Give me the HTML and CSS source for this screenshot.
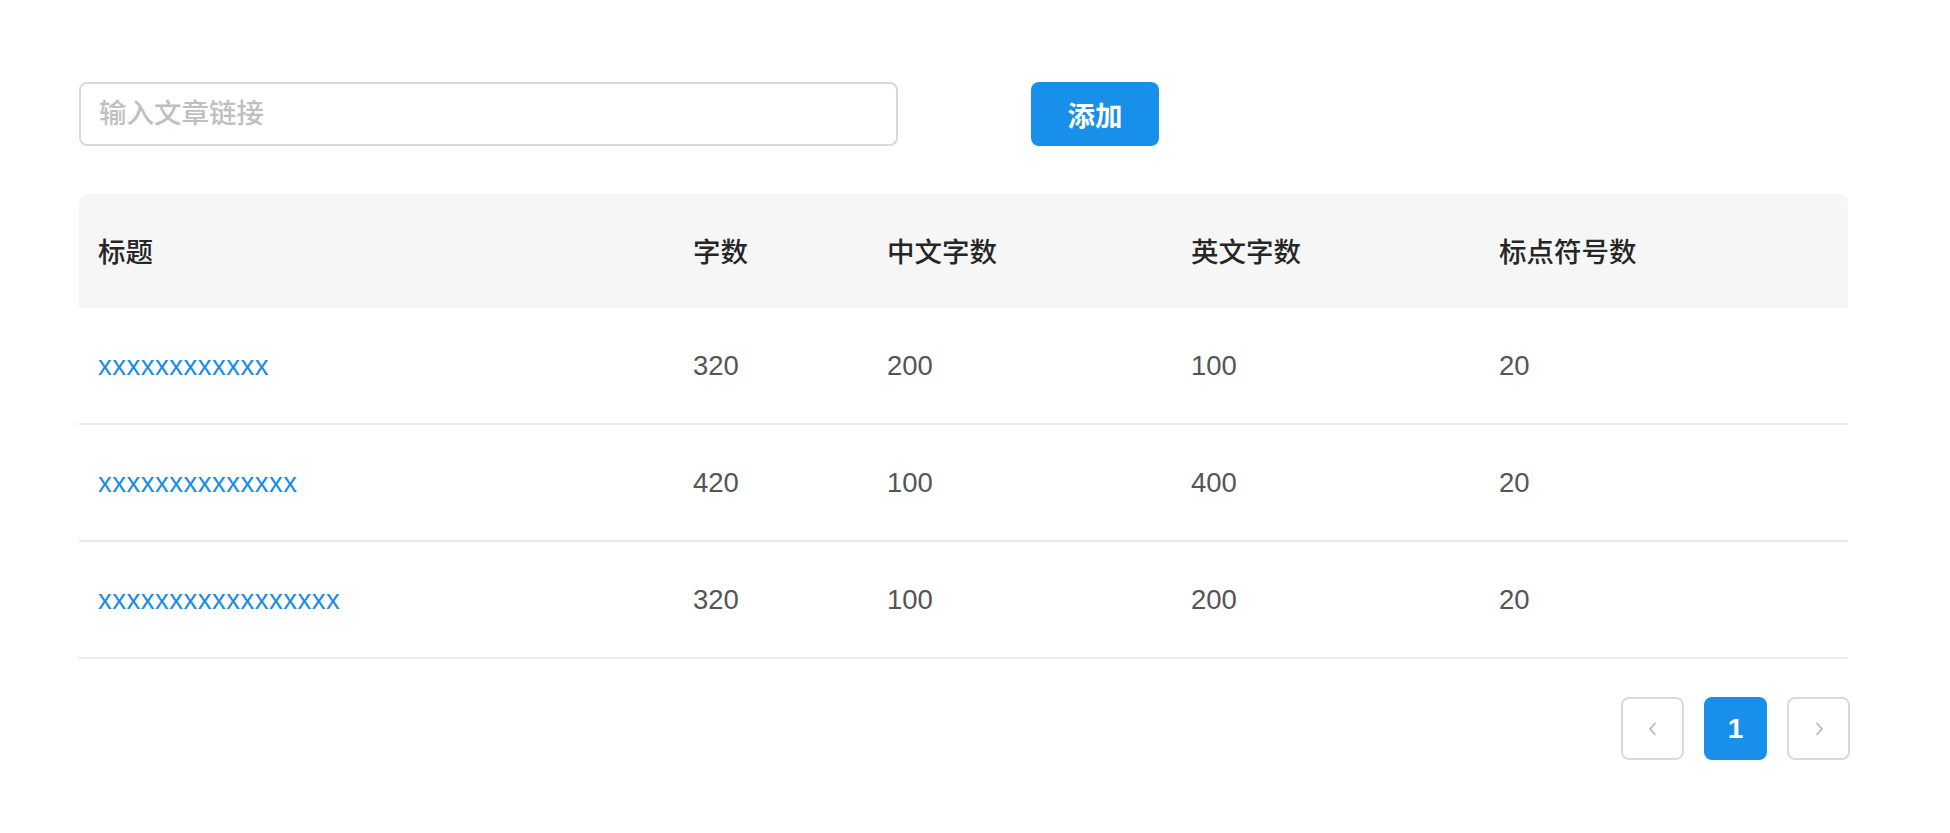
FILE: index.html
```html
<!DOCTYPE html>
<html lang="zh-CN">
<head>
<meta charset="utf-8">
<title>文章字数统计</title>
<link rel="stylesheet" href="styles.css">
</head>
<body>
<div class="page">
  <div class="toolbar">
    <input class="link-input" type="text" placeholder="输入文章链接">
    <button class="btn-primary" type="button">添加</button>
  </div>

  <table class="stats">
    <colgroup>
      <col class="c-title">
      <col class="c-total">
      <col class="c-cn">
      <col class="c-en">
      <col class="c-punct">
    </colgroup>
    <thead>
      <tr>
        <th>标题</th>
        <th>字数</th>
        <th>中文字数</th>
        <th>英文字数</th>
        <th>标点符号数</th>
      </tr>
    </thead>
    <tbody>
      <tr>
        <td><a class="title-link" href="#">xxxxxxxxxxxx</a></td>
        <td>320</td>
        <td>200</td>
        <td>100</td>
        <td>20</td>
      </tr>
      <tr>
        <td><a class="title-link" href="#">xxxxxxxxxxxxxx</a></td>
        <td>420</td>
        <td>100</td>
        <td>400</td>
        <td>20</td>
      </tr>
      <tr>
        <td><a class="title-link" href="#">xxxxxxxxxxxxxxxxx</a></td>
        <td>320</td>
        <td>100</td>
        <td>200</td>
        <td>20</td>
      </tr>
    </tbody>
  </table>

  <div class="pager">
    <button class="pager-item pager-arrow" type="button" aria-label="上一页">
      <svg width="14" height="16" viewBox="0 0 14 16"><path d="M9.5 2 L4 8 L9.5 14" fill="none" stroke="#b5b5b5" stroke-width="1.6"/></svg>
    </button>
    <button class="pager-item pager-active" type="button">1</button>
    <button class="pager-item pager-arrow" type="button" aria-label="下一页">
      <svg width="14" height="16" viewBox="0 0 14 16"><path d="M4.5 2 L10 8 L4.5 14" fill="none" stroke="#b5b5b5" stroke-width="1.6"/></svg>
    </button>
  </div>
</div>
</body>
</html>
```

FILE: styles.css
```css
html, body {
  margin: 0;
  padding: 0;
  background: #ffffff;
}

body {
  font-family: "Liberation Sans", "Noto Sans CJK SC", sans-serif;
  font-size: 27.5px;
  color: #555555;
}

.page {
  width: 1770px;
  padding: 82px 0 0 79px;
}

.toolbar {
  display: flex;
  align-items: center;
  gap: 133px;
}

.link-input {
  box-sizing: border-box;
  width: 819px;
  height: 64px;
  padding: 0 18px;
  border: 2px solid #d9d9d9;
  border-radius: 8px;
  font-family: "Liberation Sans", "Noto Sans CJK SC", sans-serif;
  font-size: 27.5px;
  color: #333333;
  outline: none;
  background: #ffffff;
}

.link-input::placeholder {
  color: #bfbfbf;
  font-weight: 500;
}

.btn-primary {
  box-sizing: border-box;
  width: 128px;
  height: 64px;
  border: none;
  border-radius: 8px;
  background: #1890ea;
  color: #ffffff;
  font-family: "Liberation Sans", "Noto Sans CJK SC", sans-serif;
  font-size: 27.5px;
  font-weight: 700;
  padding: 0;
}

.stats {
  margin-top: 48px;
  width: 1769px;
  border-collapse: separate;
  border-spacing: 0;
  table-layout: fixed;
}

.c-title { width: 595px; }
.c-total { width: 194px; }
.c-cn { width: 304px; }
.c-en { width: 308px; }
.c-punct { width: 368px; }

.stats th {
  height: 114px;
  padding: 0 19px 3px;
  background: #f6f6f6;
  text-align: left;
  font-weight: 500;
  color: #262626;
  box-sizing: border-box;
}

.stats th:first-child { border-top-left-radius: 9px; }
.stats th:last-child { border-top-right-radius: 9px; }

.stats td {
  height: 117px;
  padding: 0 19px;
  border-bottom: 2px solid #e9e9e9;
  box-sizing: border-box;
  color: #555555;
}

.title-link {
  color: #1a8ce8;
  text-decoration: none;
  letter-spacing: 0.5px;
}

.pager {
  margin-top: 38px;
  display: flex;
  justify-content: flex-end;
  gap: 20px;
  width: 1771px;
}

.pager-item {
  box-sizing: border-box;
  width: 63px;
  height: 63px;
  border-radius: 8px;
  display: flex;
  align-items: center;
  justify-content: center;
  padding: 0;
  font-family: "Liberation Sans", "Noto Sans CJK SC", sans-serif;
}

.pager-arrow {
  border: 2px solid #dadada;
  background: #ffffff;
}

.pager-active {
  border: none;
  background: #1890ea;
  color: #ffffff;
  font-size: 28px;
  font-weight: 700;
}
```
